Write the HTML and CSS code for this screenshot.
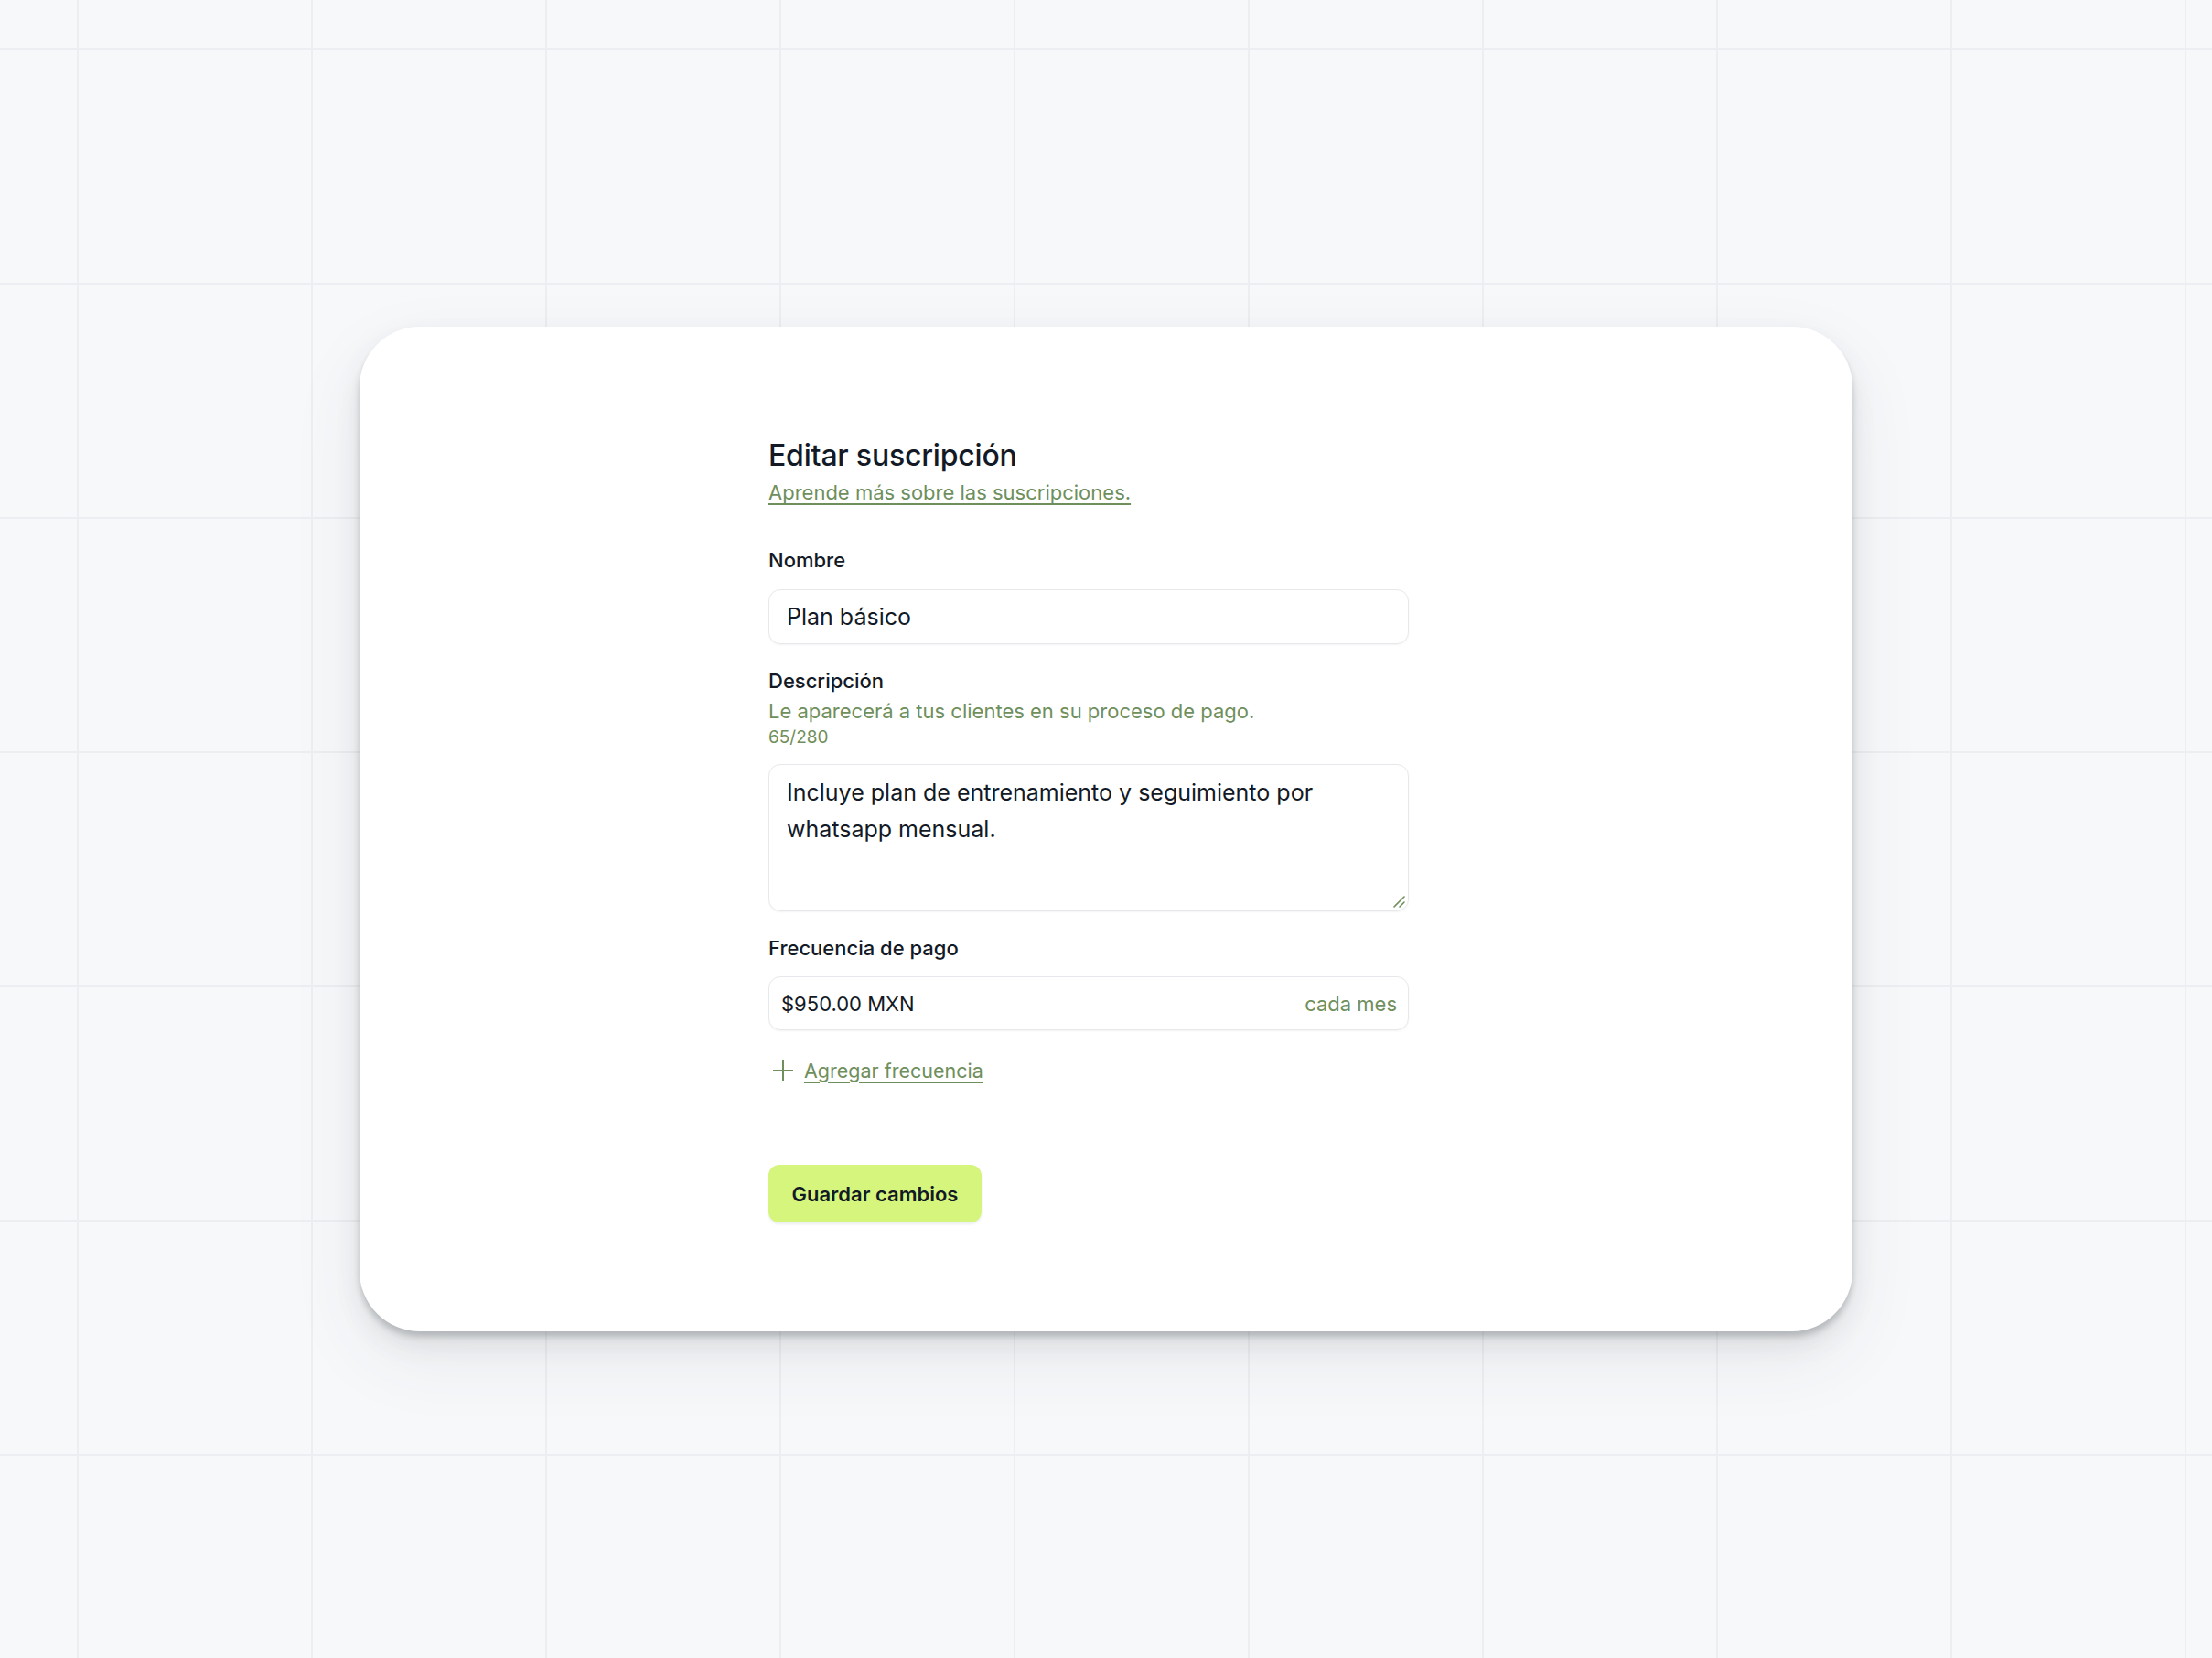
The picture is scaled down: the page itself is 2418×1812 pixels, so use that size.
FILE: index.html
```html
<!DOCTYPE html>
<html lang="es">
<head>
<meta charset="utf-8">
<title>Editar suscripción</title>
<link rel="stylesheet" href="styles.css">
</head>
<body>
<main class="stage">
  <section class="card">
    <form class="form">
      <h1 class="title">Editar suscripción</h1>
      <a class="learn" href="#">Aprende más sobre las suscripciones.</a>

      <div class="field field-first">
        <label class="label">Nombre</label>
        <div class="input">Plan básico</div>
      </div>

      <div class="field">
        <label class="label">Descripción</label>
        <p class="help">Le aparecerá a tus clientes en su proceso de pago.</p>
        <p class="counter">65/280</p>
        <div class="textarea">
          Incluye plan de entrenamiento y seguimiento por whatsapp mensual.
          <svg class="grip" width="16" height="16" viewBox="0 0 16 16" aria-hidden="true">
            <path d="M4 15 L15 4 M10 15 L15 10" stroke="#6f8f5c" stroke-width="1.6" stroke-linecap="round" fill="none"/>
          </svg>
        </div>
      </div>

      <div class="field">
        <label class="label">Frecuencia de pago</label>
        <div class="price">
          <span class="amount">$950.00 MXN</span>
          <span class="period">cada mes</span>
        </div>
      </div>

      <a class="add" href="#">
        <svg class="plus" width="28" height="28" viewBox="0 0 28 28" aria-hidden="true">
          <path d="M14 4 V24 M4 14 H24" stroke="#6f8f5c" stroke-width="2" stroke-linecap="square" fill="none"/>
        </svg>
        <span class="add-text">Agregar frecuencia</span>
      </a>

      <div class="actions">
        <button type="button" class="save">Guardar cambios</button>
      </div>
    </form>
  </section>
</main>
</body>
</html>
```

FILE: styles.css
```css
* { box-sizing: border-box; }

html, body {
  margin: 0;
  padding: 0;
}

body {
  font-family: Inter, "Noto Sans", "Liberation Sans", sans-serif;
  color: #111827;
  background-color: #f7f8fa;
  background-image:
    linear-gradient(to right, #eceef1 0, #eceef1 2px, transparent 2px),
    linear-gradient(to bottom, #eceef1 0, #eceef1 2px, transparent 2px);
  background-size: 256px 256px;
  background-position: 84px 53px;
}

.stage {
  min-height: 100vh;
  display: flex;
  align-items: center;
  justify-content: center;
}

.card {
  width: 1632px;
  height: 1098px;
  background: #ffffff;
  border-radius: 66px;
  padding: 121px 0 0 447px;
  box-shadow:
    0 6px 6px rgba(60, 66, 72, 0.24),
    0 14px 28px rgba(60, 66, 72, 0.10),
    0 30px 80px rgba(60, 66, 72, 0.08);
}

.form {
  width: 700px;
  display: flex;
  flex-direction: column;
  align-items: flex-start;
}

.title {
  margin: 0;
  font-size: 32px;
  line-height: 40px;
  font-weight: 500;
  letter-spacing: -0.2px;
  color: #131a26;
}

.learn {
  margin-top: 5px;
  font-size: 22px;
  line-height: 30px;
  color: #6f8f5c;
  text-decoration: underline;
  text-underline-offset: 4px;
  text-decoration-thickness: 1.5px;
}

.field {
  width: 100%;
  display: flex;
  flex-direction: column;
  margin-top: 25px;
}

.field-first { margin-top: 44px; }

.label {
  font-size: 22px;
  line-height: 30px;
  font-weight: 500;
  color: #131a26;
}

.input {
  margin-top: 17px;
  height: 60px;
  border: 1px solid #e6e8eb;
  border-radius: 13px;
  padding: 0 19px;
  display: flex;
  align-items: center;
  font-size: 25px;
  color: #131a26;
  box-shadow: 0 1px 2px rgba(17, 24, 39, 0.05);
}

.help {
  margin: 3px 0 0;
  font-size: 22px;
  line-height: 30px;
  color: #6f8f5c;
}

.counter {
  margin: 2px 0 0;
  font-size: 19px;
  line-height: 24px;
  color: #6f8f5c;
}

.textarea {
  position: relative;
  margin-top: 17px;
  height: 161px;
  border: 1px solid #e6e8eb;
  border-radius: 13px;
  padding: 10px 40px 0 19px;
  font-size: 25px;
  line-height: 40px;
  color: #131a26;
  box-shadow: 0 1px 2px rgba(17, 24, 39, 0.05);
}

.grip {
  position: absolute;
  right: 3px;
  bottom: 3px;
}

.price {
  margin-top: 16px;
  height: 59px;
  border: 1px solid #e6e8eb;
  border-radius: 13px;
  padding: 0 12px 0 13px;
  display: flex;
  align-items: center;
  justify-content: space-between;
  font-size: 22px;
  box-shadow: 0 1px 2px rgba(17, 24, 39, 0.05);
}

.amount { color: #131a26; }
.period { color: #6f8f5c; }

.add {
  margin-top: 29px;
  display: flex;
  align-items: center;
  gap: 9px;
  color: #6f8f5c;
  text-decoration: none;
  margin-left: 2px;
}

.add-text {
  font-size: 21.5px;
  line-height: 30px;
  text-decoration: underline;
  text-underline-offset: 4px;
  text-decoration-thickness: 1.5px;
}

.actions { margin-top: 88px; }

.save {
  width: 233px;
  height: 63px;
  border: none;
  border-radius: 12px;
  background: #d5f57c;
  font-family: inherit;
  font-size: 22px;
  font-weight: 600;
  color: #131a26;
  box-shadow: 0 2px 3px rgba(17, 24, 39, 0.08);
  cursor: pointer;
}
```
